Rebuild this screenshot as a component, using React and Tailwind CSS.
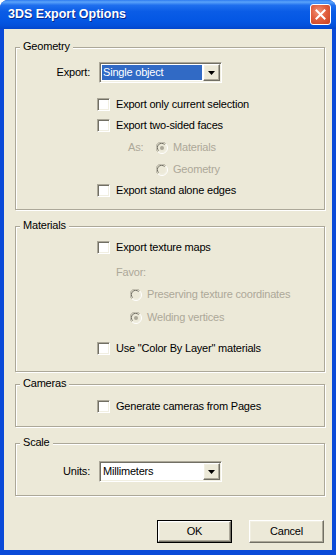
import React from "react";

const raised =
  "border border-t-white border-l-white border-b-[#716F64] border-r-[#716F64] shadow-[inset_-1px_-1px_0_#ACA899,inset_1px_1px_0_#F1EFE2]";

function Checkbox() {
  return (
    <span className="block w-[13px] h-[13px] shrink-0 bg-white border border-t-[#ACA899] border-l-[#ACA899] border-b-white border-r-white shadow-[inset_1px_1px_0_#716F64,inset_-1px_-1px_0_#F1EFE2]" />
  );
}

function Radio({ checked }) {
  return (
    <svg width="12" height="12" viewBox="0 0 12 12" className="shrink-0 block">
      <circle cx="6" cy="6" r="5.5" fill="#ECE9D8" />
      <path d="M1.6 9.6 A5.2 5.2 0 0 1 9.6 1.6" stroke="#ACA899" strokeWidth="1" fill="none" />
      <path d="M2.6 8.6 A4 4 0 0 1 8.6 2.6" stroke="#716F64" strokeWidth="1" fill="none" />
      <path d="M9.9 2.1 A5.2 5.2 0 0 1 2.1 9.9" stroke="#FFFFFF" strokeWidth="1" fill="none" />
      <path d="M9 3 A4 4 0 0 1 3 9" stroke="#F1EFE2" strokeWidth="1" fill="none" />
      {checked && <circle cx="6" cy="6" r="2" fill="#ACA899" />}
    </svg>
  );
}

function Arrow() {
  return (
    <svg width="7" height="4" viewBox="0 0 7 4" className="block">
      <polygon points="0,0 7,0 3.5,4" fill="#000" />
    </svg>
  );
}

function Combo({ value, selected }) {
  return (
    <div className="ml-[9px] w-[123px] h-[21px] flex bg-white border border-t-[#ACA899] border-l-[#ACA899] border-b-white border-r-white shadow-[inset_1px_1px_0_#716F64,inset_-1px_-1px_0_#F1EFE2] p-[1px]">
      <div className="flex-1 flex p-[1px]">
        <div
          className={
            selected
              ? "flex-1 flex items-center pl-[1px] bg-[#316AC5] text-white"
              : "flex-1 flex items-center pl-[1px] text-black"
          }
        >
          {value}
        </div>
      </div>
      <div className={`w-[17px] h-full flex items-center justify-center bg-[#ECE9D8] ${raised}`}>
        <Arrow />
      </div>
    </div>
  );
}

function Group({ label, className, children }) {
  return (
    <div
      className={`relative ml-[11px] w-[310px] border border-[#ACA899] shadow-[inset_1px_1px_0_#fff,1px_1px_0_#fff] flex flex-col ${className}`}
    >
      <span className="absolute left-[4px] -top-[8px] bg-[#ECE9D8] px-[3px] leading-[13px]">
        {label}
      </span>
      {children}
    </div>
  );
}

function CheckRow({ label, className }) {
  return (
    <div className={`flex items-center h-[13px] pl-[81px] ${className}`}>
      <Checkbox />
      <span className="ml-[6px] leading-[13px]">{label}</span>
    </div>
  );
}

export default function App() {
  return (
    <div
      className="w-[336px] h-[555px] bg-[#0A4AD8] flex flex-col rounded-t-[8px] overflow-hidden text-[11px] tracking-[-0.2px] text-black"
      style={{ fontFamily: '"Liberation Sans", Arial, sans-serif' }}
    >
      {/* title bar */}
      <div className="h-[29px] shrink-0 flex items-center justify-between pl-[8px] pr-[5px] bg-[linear-gradient(to_bottom,#2E7BF0_0%,#5AA3FA_7%,#1F6FEE_18%,#0A5CE6_40%,#0457E4_70%,#0350DB_88%,#0346CC_100%)]">
        <span className="text-white font-bold text-[12.5px] tracking-[0px] [text-shadow:1px_1px_0_#0A2A8A]">
          3DS Export Options
        </span>
        <div className="w-[21px] h-[21px] rounded-[3px] border border-white bg-[radial-gradient(circle_at_40%_35%,#F19478_0%,#E2603F_45%,#C8401F_100%)] flex items-center justify-center">
          <svg width="11" height="11" viewBox="0 0 11 11">
            <path d="M1.5 1.5 L9.5 9.5 M9.5 1.5 L1.5 9.5" stroke="#fff" strokeWidth="2" strokeLinecap="square" />
          </svg>
        </div>
      </div>

      {/* body */}
      <div className="mx-[4px] mb-[5px] flex-1 bg-[#ECE9D8] flex flex-col pt-[18px]">
        <Group label="Geometry" className="h-[163px]">
          <div className="flex items-center h-[21px] mt-[14px]">
            <span className="w-[74px] text-right">Export:</span>
            <Combo value="Single object" selected />
          </div>
          <CheckRow label="Export only current selection" className="mt-[15px]" />
          <CheckRow label="Export two-sided faces" className="mt-[8px]" />
          <div className="flex items-center h-[13px] mt-[9px] pl-[112px] text-[#ACA899]">
            <span className="w-[28px]">As:</span>
            <Radio checked />
            <span className="ml-[5px]">Materials</span>
          </div>
          <div className="flex items-center h-[13px] mt-[9px] pl-[140px] text-[#ACA899]">
            <Radio />
            <span className="ml-[5px]">Geometry</span>
          </div>
          <CheckRow label="Export stand alone edges" className="mt-[8px]" />
        </Group>

        <Group label="Materials" className="h-[146px] mt-[16px]">
          <CheckRow label="Export texture maps" className="mt-[14px]" />
          <div className="flex items-center h-[13px] mt-[12px] pl-[100px] text-[#ACA899]">
            Favor:
          </div>
          <div className="flex items-center h-[13px] mt-[9px] pl-[114px] text-[#ACA899]">
            <Radio />
            <span className="ml-[5px]">Preserving texture coordinates</span>
          </div>
          <div className="flex items-center h-[13px] mt-[10px] pl-[114px] text-[#ACA899]">
            <Radio checked />
            <span className="ml-[5px]">Welding vertices</span>
          </div>
          <CheckRow label={'Use "Color By Layer" materials'} className="mt-[18px]" />
        </Group>

        <Group label="Cameras" className="h-[43px] mt-[12px]">
          <CheckRow label="Generate cameras from Pages" className="mt-[15px]" />
        </Group>

        <Group label="Scale" className="h-[53px] mt-[16px]">
          <div className="flex items-center h-[21px] mt-[17px]">
            <span className="w-[74px] text-right">Units:</span>
            <Combo value="Millimeters" />
          </div>
        </Group>

        <div className="flex justify-end gap-[17px] mt-[24px] pr-[8px]">
          <div className="w-[75px] h-[23px] border border-black">
            <div className={`w-full h-full flex items-center justify-center bg-[#ECE9D8] ${raised}`}>OK</div>
          </div>
          <div className={`w-[75px] h-[23px] flex items-center justify-center bg-[#ECE9D8] ${raised}`}>
            Cancel
          </div>
        </div>
      </div>
    </div>
  );
}
